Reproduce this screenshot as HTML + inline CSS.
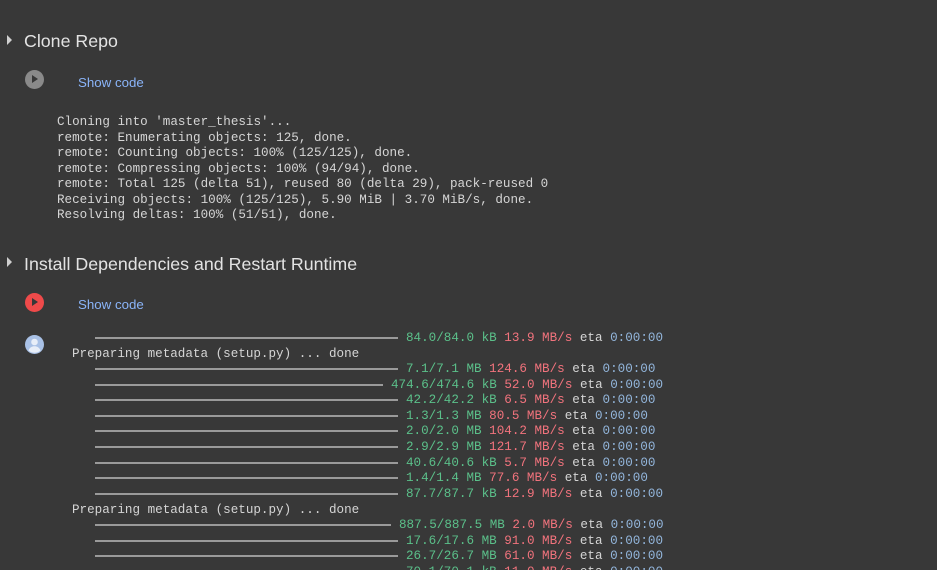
<!DOCTYPE html>
<html><head><meta charset="utf-8"><style>
html,body{margin:0;padding:0;background:#383838;width:937px;height:570px;overflow:hidden;position:relative}
.h{position:absolute;left:24px;font:17.8px "Liberation Sans",sans-serif;color:#e3e3e3;line-height:24px}
.tri{position:absolute;left:7px;width:0;height:0;border-left:5px solid #cfcfcf;border-top:5px solid transparent;border-bottom:5px solid transparent}
.sc{position:absolute;left:78px;font:13.3px "Liberation Sans",sans-serif;color:#8ab4f8;line-height:16px}
.m{position:absolute;font:12.6px "Liberation Mono",monospace;color:#d5d5d5;white-space:pre;line-height:15.5px}
.bar{position:absolute;left:95px;height:2px;background:#9a9a9a}
.g{color:#5bc08a}.r{color:#f2737d}.b{color:#93b6dc}
.run{position:absolute;left:25px;width:19px;height:19px;border-radius:50%}
.run:after{content:"";position:absolute;left:7px;top:5px;border-left:6px solid #383838;border-top:4.5px solid transparent;border-bottom:4.5px solid transparent}
</style></head><body>
<div class="tri" style="top:35px"></div>
<div class="h" style="top:29px">Clone Repo</div>
<div class="run" style="top:70px;background:#8a8a8a"></div>
<div class="sc" style="top:75px">Show code</div>
<div class="m" style="left:57px;top:115px">Cloning into 'master_thesis'...
remote: Enumerating objects: 125, done.
remote: Counting objects: 100% (125/125), done.
remote: Compressing objects: 100% (94/94), done.
remote: Total 125 (delta 51), reused 80 (delta 29), pack-reused 0
Receiving objects: 100% (125/125), 5.90 MiB | 3.70 MiB/s, done.
Resolving deltas: 100% (51/51), done.</div>
<div class="tri" style="top:257px"></div>
<div class="h" style="top:252px">Install Dependencies and Restart Runtime</div>
<div class="run" style="top:293px;background:#ef4a4a"></div>
<div class="sc" style="top:297px">Show code</div>
<svg style="position:absolute;left:25px;top:335px" width="19" height="19" viewBox="0 0 19 19"><circle cx="9.5" cy="9.5" r="9.5" fill="#a9c1e6"/><circle cx="9.5" cy="7" r="3.3" fill="#e8eef8"/><path d="M3.5 15.5c1.2-3 3.5-4.2 6-4.2s4.8 1.2 6 4.2a9 9 0 0 1-12 0z" fill="#e8eef8"/></svg>

<div class="bar" style="top:337px;width:303px"></div><div class="m" style="left:406px;top:331px"><span class="g">84.0/84.0 kB</span> <span class="r">13.9 MB/s</span> eta <span class="b">0:00:00</span></div>
<div class="m" style="left:72px;top:347px">Preparing metadata (setup.py) ... done</div>
<div class="bar" style="top:368px;width:303px"></div><div class="m" style="left:406px;top:362px"><span class="g">7.1/7.1 MB</span> <span class="r">124.6 MB/s</span> eta <span class="b">0:00:00</span></div>
<div class="bar" style="top:384px;width:288px"></div><div class="m" style="left:391px;top:378px"><span class="g">474.6/474.6 kB</span> <span class="r">52.0 MB/s</span> eta <span class="b">0:00:00</span></div>
<div class="bar" style="top:399px;width:303px"></div><div class="m" style="left:406px;top:393px"><span class="g">42.2/42.2 kB</span> <span class="r">6.5 MB/s</span> eta <span class="b">0:00:00</span></div>
<div class="bar" style="top:415px;width:303px"></div><div class="m" style="left:406px;top:409px"><span class="g">1.3/1.3 MB</span> <span class="r">80.5 MB/s</span> eta <span class="b">0:00:00</span></div>
<div class="bar" style="top:430px;width:303px"></div><div class="m" style="left:406px;top:424px"><span class="g">2.0/2.0 MB</span> <span class="r">104.2 MB/s</span> eta <span class="b">0:00:00</span></div>
<div class="bar" style="top:446px;width:303px"></div><div class="m" style="left:406px;top:440px"><span class="g">2.9/2.9 MB</span> <span class="r">121.7 MB/s</span> eta <span class="b">0:00:00</span></div>
<div class="bar" style="top:462px;width:303px"></div><div class="m" style="left:406px;top:456px"><span class="g">40.6/40.6 kB</span> <span class="r">5.7 MB/s</span> eta <span class="b">0:00:00</span></div>
<div class="bar" style="top:477px;width:303px"></div><div class="m" style="left:406px;top:471px"><span class="g">1.4/1.4 MB</span> <span class="r">77.6 MB/s</span> eta <span class="b">0:00:00</span></div>
<div class="bar" style="top:493px;width:303px"></div><div class="m" style="left:406px;top:487px"><span class="g">87.7/87.7 kB</span> <span class="r">12.9 MB/s</span> eta <span class="b">0:00:00</span></div>
<div class="m" style="left:72px;top:503px">Preparing metadata (setup.py) ... done</div>
<div class="bar" style="top:524px;width:296px"></div><div class="m" style="left:399px;top:518px"><span class="g">887.5/887.5 MB</span> <span class="r">2.0 MB/s</span> eta <span class="b">0:00:00</span></div>
<div class="bar" style="top:540px;width:303px"></div><div class="m" style="left:406px;top:534px"><span class="g">17.6/17.6 MB</span> <span class="r">91.0 MB/s</span> eta <span class="b">0:00:00</span></div>
<div class="bar" style="top:555px;width:303px"></div><div class="m" style="left:406px;top:549px"><span class="g">26.7/26.7 MB</span> <span class="r">61.0 MB/s</span> eta <span class="b">0:00:00</span></div>
<div class="bar" style="top:571px;width:303px"></div><div class="m" style="left:406px;top:565px"><span class="g">70.1/70.1 kB</span> <span class="r">11.0 MB/s</span> eta <span class="b">0:00:00</span></div>
</body></html>
